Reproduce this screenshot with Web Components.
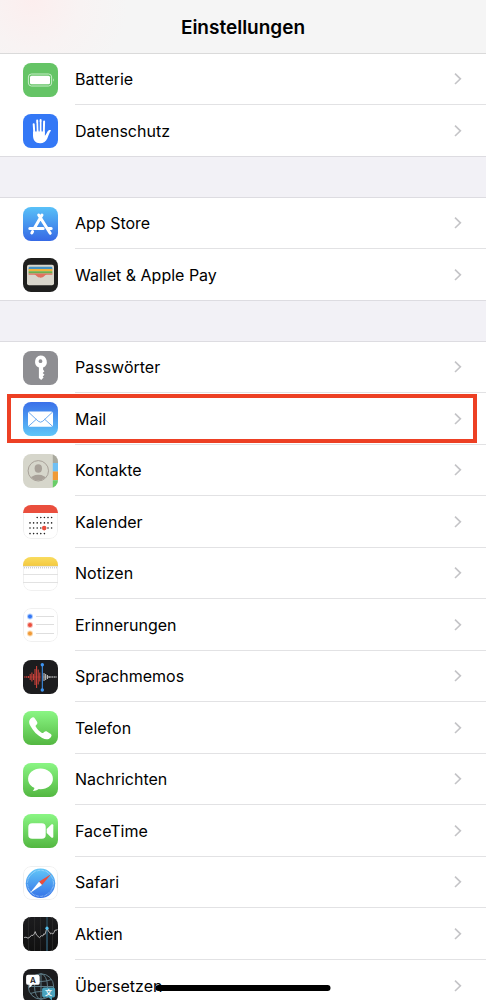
<!DOCTYPE html>
<html lang="de">
<head>
<meta charset="utf-8">
<meta name="viewport" content="width=device-width, initial-scale=1">
<title>Einstellungen</title>
<style>
  body {
    margin: 0;
    background: #f2f1f6;
    color: #000;
    font-family: Inter, "Liberation Sans", sans-serif;
  }
</style>
</head>
<body>
<settings-screen>
  <title-bar slot="header">Einstellungen</title-bar>
  <settings-group>
    <settings-row icon="battery">Batterie</settings-row>
    <settings-row icon="privacy">Datenschutz</settings-row>
  </settings-group>
  <settings-group>
    <settings-row icon="appstore">App Store</settings-row>
    <settings-row icon="wallet">Wallet &amp; Apple Pay</settings-row>
  </settings-group>
  <settings-group>
    <settings-row icon="passwords">Passwörter</settings-row>
    <settings-row icon="mail" marked>Mail</settings-row>
    <settings-row icon="contacts">Kontakte</settings-row>
    <settings-row icon="calendar">Kalender</settings-row>
    <settings-row icon="notes">Notizen</settings-row>
    <settings-row icon="reminders">Erinnerungen</settings-row>
    <settings-row icon="memos">Sprachmemos</settings-row>
    <settings-row icon="phone">Telefon</settings-row>
    <settings-row icon="messages">Nachrichten</settings-row>
    <settings-row icon="facetime">FaceTime</settings-row>
    <settings-row icon="safari">Safari</settings-row>
    <settings-row icon="stocks">Aktien</settings-row>
    <settings-row icon="translate">Übersetzen</settings-row>
  </settings-group>
</settings-screen>

<script>
// Repeats a shape for a list of [x, y] points
const dots = (points, r, fill) =>
  points.map(([x, y]) => `<circle cx="${x}" cy="${y}" r="${r}" fill="${fill}"/>`).join('');

// Vertical bars of the waveform: [x, half height]
const bars = (list, color) =>
  list.map(([x, h]) => `<path d="M${x} ${17 - h}V${17 + h}" stroke="${color}" stroke-width="1"/>`).join('');

const calendarDots = () => {
  const cols = [7, 10.6, 14.2, 17.8, 21.4, 25, 28.6];
  const rows = [[12.5, 2, 7], [17.9, 0, 7], [23, 0, 7], [28.6, 0, 5]];
  return rows.map(([y, from, to]) => dots(cols.slice(from, to).map((x) => [x, y]), 0.8, '#222')).join('');
};

// Hairline round the white tiles
const outline = '<rect x=".5" y=".5" width="34" height="33" rx="7.5" fill="none" stroke="#000" stroke-opacity=".06"/>';

// Every icon is drawn on a 35 x 34 tile
const ICONS = {
  battery: {
    background: '#65c466',
    art: `<rect x="5.4" y="11" width="23.2" height="12" rx="3" fill="none" stroke="#c9edc9" stroke-width="1"/>
      <rect x="7" y="12.7" width="20" height="8.6" rx="1.5" fill="#fff"/>
      <path d="M30 15.2q1.8 1.8 0 3.6z" fill="#c9edc9"/>`
  },
  privacy: {
    background: '#3478f6',
    art: `<g stroke="#fff" stroke-width="2" stroke-linecap="round" fill="none">
        <path d="M10.7 10.2L11.4 20M14.2 6.6L14.7 18M17.6 6V18M21.1 7.5L20.8 18"/></g>
      <path d="M10 17.5h11.9v4.2c1.5-1 2.3-4.8 4.2-5.6 1-.5 2 .1 1.8.7-1.5 1.8-2.4 5-3.6 7.6-1.4 3-3.8 4.8-7.1 4.8-5 0-7.2-3.2-7.2-8z" fill="#fff"/>
      <path d="M12.8 9v7.5M16.1 8v8.5M19.2 8v8.5" stroke="#3478f6" stroke-width=".8"/>`
  },
  appstore: {
    background: 'linear-gradient(#59c1f8, #3669e5)',
    art: `<g stroke="#fff" stroke-width="3" stroke-linecap="round" fill="none">
        <path d="M19 8L11.5 21M15.7 8L27.2 26.3M6.8 21.4H20.2M25 21.4H28.2M9.6 24.6L8.8 26"/></g>`
  },
  wallet: {
    background: '#1f1f1e',
    art: `<rect x="4" y="6.8" width="27" height="20.4" rx="2" fill="#d9d6cc"/>
      <path d="M5.6 10q0-1.3 1.3-1.3H28q1.4 0 1.4 1.3v1.4H5.6z" fill="#4694c4"/>
      <path d="M5.6 11h23.8v2.3H5.6z" fill="#f2b33c"/>
      <path d="M5.6 13.2h23.8v2.4H5.6z" fill="#6cb04d"/>
      <path d="M5.6 15.4h23.8v3H5.6z" fill="#e1715e"/>
      <path d="M4 16.8h7.2c1.6 0 2.2.8 2.9 1.9 1.6 1.9 5.2 1.9 6.8 0 .7-1.1 1.3-1.9 2.9-1.9H31v9.2H4z" fill="#d9d6cc"/>
      <path d="M12.6 16.6c.9.4 1.3 1.2 1.9 2 1.4 1.6 4.6 1.6 6 0 .6-.8 1-1.6 1.9-2z" fill="#e1715e"/>`
  },
  passwords: {
    background: '#8e8e92',
    art: `<path fill-rule="evenodd" fill="#fff" d="M17.5 4.4a6.4 6.4 0 0 1 2.6 12.2v2.2l1.3 1.4-1.7 1.8 1.8 1.8-1.8 1.7.9 1-2.4 2.6-2.3-2.2V16.6A6.4 6.4 0 0 1 17.5 4.4zm0 3.9a1.9 1.9 0 1 0 0 3.8 1.9 1.9 0 0 0 0-3.8z"/>`
  },
  mail: {
    background: 'linear-gradient(#3a70e9, #5fc6f8)',
    art: `<rect x="5" y="9.6" width="25" height="15.2" rx="1.8" fill="#fff"/>
      <path d="M5.6 10.2l9.6 9q2.3 2 4.6 0l9.6-9M5.6 24.2l7.8-7M29.4 24.2l-7.8-7" fill="none" stroke="#5ba0ee" stroke-width=".9"/>`
  },
  contacts: {
    background: '#d6d6cb',
    art: `<path d="M29.8 0H35v9h-5.2z" fill="#a9a99e"/>
      <path d="M29.8 9H35v8.4h-5.2z" fill="#6fc0f5"/>
      <path d="M29.8 17.6H35V26h-5.2z" fill="#f09a37"/>
      <path d="M29.8 26.2H35V34h-5.2z" fill="#68ce67"/>
      <clipPath id="face"><circle cx="15.3" cy="16.8" r="9.8"/></clipPath>
      <circle cx="15.3" cy="16.8" r="10.2" fill="none" stroke="#a8a199" stroke-width="1"/>
      <g clip-path="url(#face)" fill="#a8a199"><ellipse cx="15.3" cy="14.5" rx="3.7" ry="4.2"/>
        <ellipse cx="15.3" cy="25.6" rx="8" ry="4.8"/></g>`
  },
  calendar: {
    background: '#fff',
    art: `${outline}<path d="M0 0h35v8H0z" fill="#ea4e3d"/>${calendarDots()}
      <circle cx="21.2" cy="23.1" r="2.3" fill="#ea4e3d"/>`
  },
  notes: {
    background: '#fff',
    art: `${outline}<linearGradient id="pad" x2="0" y2="1"><stop stop-color="#f9dc5f"/><stop offset="1" stop-color="#f4c93f"/></linearGradient>
      <path d="M0 0h35v9H0z" fill="url(#pad)"/>
      <path d="M0 9.3h35" stroke="#cfcabb" stroke-width=".6"/>
      <path d="M1 10.8h33" stroke="#bbb" stroke-width="1" stroke-dasharray="1 1"/>
      <path d="M0 17.5h35M0 25.5h35" stroke="#e2e2e2" stroke-width="1"/>`
  },
  reminders: {
    background: '#fff',
    art: `${outline}${dots([[7, 8.5]], 3, '#b5d0fb')}${dots([[7, 17]], 3, '#f8bdb7')}${dots([[7, 25.5]], 3, '#fbd9ae')}
      ${dots([[7, 8.5]], 2, '#3478f6')}${dots([[7, 17]], 2, '#ea4e3d')}${dots([[7, 25.5]], 2, '#f09a37')}
      <path d="M13 8.5h18M13 16.5h18M13 25.5h18" stroke="#dedede" stroke-width="1"/>`
  },
  memos: {
    background: '#1c1c1e',
    art: `${bars([[1.8, .5], [3.6, .6], [5.4, 1], [7.2, 3], [8.9, 4.5], [10.6, 3], [12, 8], [13.6, 11], [15.2, 7.5], [16.8, 4.5]], '#d8453c')}
      ${bars([[21, 4], [22.7, 3], [24.4, 2], [26.1, 1], [27.9, .6], [29.7, .6], [31.5, .5], [33, .5]], '#cfcfcf')}
      <path d="M1 17h17" stroke="#d8453c" stroke-width=".4"/><path d="M20 17h14" stroke="#bbb" stroke-width=".4"/>
      <path d="M19.3 4.7V30" stroke="#3f97f6" stroke-width="1"/>${dots([[19.3, 4.7], [19.3, 30]], 1.7, '#3f97f6')}`
  },
  phone: {
    background: 'linear-gradient(#8af684, #53b741)',
    art: `<path fill="#fff" d="M8.1 7.2c1.5-1.3 2.8-1.3 3.8.3l2 3c.8 1.3.6 2.3-.4 3.2-1 .8-1.1 1.4-.5 2.4 1.4 2.3 3.3 4.2 5.6 5.6 1 .6 1.7.5 2.4-.4.9-1.1 1.9-1.4 3.2-.6l3.2 2.1c1.5 1 1.5 2.2.2 3.6-2.1 2.3-4.8 2.4-8.4.5C14 24 10.4 20.3 7.6 15.2c-1.9-3.3-2-6 .5-8z"/>`
  },
  messages: {
    background: 'linear-gradient(#8af684, #53b741)',
    art: `<ellipse cx="17.5" cy="15.9" rx="12.4" ry="10.4" fill="#fff"/>
      <path d="M11.6 22.5c.3 2.4-.4 4.1-1.8 5.4 2.8-.1 5-1 6.5-2.5z" fill="#fff"/>`
  },
  facetime: {
    background: 'linear-gradient(#8af684, #53b741)',
    art: `<rect x="5.3" y="9.2" width="17.4" height="15.6" rx="3.8" fill="#fff"/>
      <path d="M23.7 15l4.6-4.4c.9-.8 2-.5 2 .7v11.4c0 1.2-1.1 1.5-2 .7L23.7 19z" fill="#fff"/>`
  },
  safari: {
    background: '#fff',
    art: `${outline}<linearGradient id="dial" x2="0" y2="1"><stop stop-color="#62c7f8"/><stop offset="1" stop-color="#3572e8"/></linearGradient>
      <circle cx="17.5" cy="17.3" r="14.7" fill="url(#dial)"/>
      <circle cx="17.5" cy="17.3" r="13" fill="none" stroke="#b9dcfb" stroke-width="1.2" stroke-dasharray=".5 .86"/>
      <path d="M28.2 8L16 15.7l3 3.3z" fill="#ea4e3d"/><path d="M7 27l9-11.3 3 3.3z" fill="#fff"/>`
  },
  stocks: {
    background: 'linear-gradient(#1c1c1e, #101010)',
    art: `<path d="M5.5 0v34M11.5 0v34M17.5 0v34M29.5 0v34" stroke="#2c2c2c" stroke-width=".8"/>
      <path d="M24 11v23" stroke="#3c7c9c" stroke-width="1"/><path d="M24 0v11" stroke="#2f5c72" stroke-width="1"/>
      <path d="M1 20.5l2-.3 2 1 2-1.2 1.5-1.8 1.5.3 1.2-1.6 1-2.3 1.3 3.4 1.5 1.3 1.5 1.4 1.8-2 1.5.3 1-2.2 1.2.6 1.2-4.2 1-1.8 1.3 3 1 .6 1.2 2 1-.8 1.2.8 1.2-1.8 1-2.2 1.2.5 1-1.5" fill="none" stroke="#d0d0d0" stroke-width=".8"/>
      ${dots([[24, 11.2]], 1.6, '#53c0ee')}`
  },
  translate: {
    background: '#1c1c1e',
    art: `<g fill="none" stroke="#5d7a85" stroke-width="1"><circle cx="18" cy="17.5" r="12.7"/>
        <ellipse cx="18" cy="17.5" rx="6.5" ry="12.7"/><path d="M18 4.8v25.4M5.3 17.5h25.4M7.5 10.5q10.5 4 21 0M7.5 24.5q10.5-4 21 0"/></g>
      <path d="M5 5.8h9.8q1.9 0 1.9 1.9v6.2q0 1.9-1.9 1.9H9.5L6.3 19v-3.2H5q-1.9 0-1.9-1.9V7.7q0-1.9 1.9-1.9z" fill="#fff"/>
      <path d="M21 18.5h9.2q1.9 0 1.9 1.9v6.2q0 1.9-1.9 1.9H29v3l-3.2-3H21q-1.9 0-1.9-1.9v-6.2q0-1.9 1.9-1.9z" fill="#4aa3bd"/>
      <text x="10" y="14" font-size="8" font-weight="600" text-anchor="middle" fill="#1c1c1e">A</text>
      <text x="25.6" y="26" font-size="7" font-weight="700" text-anchor="middle" fill="#fff" font-family="Noto Sans CJK SC, sans-serif">文</text>`
  }
};

class AppIcon extends HTMLElement {
  static get observedAttributes() {
    return ['name'];
  }
  constructor() {
    super();
    this.attachShadow({ mode: 'open' });
  }
  attributeChangedCallback() {
    const icon = ICONS[this.getAttribute('name')];
    if (!icon) return;
    this.shadowRoot.innerHTML = `
      <style>
        :host {
          display: block;
          flex: none;
          width: 35px;
          height: 34px;
          border-radius: 8px;
          overflow: hidden;
          background: ${icon.background};
        }
        svg { display: block; width: 100%; height: 100%; }
      </style>
      <svg viewBox="0 0 35 34" aria-hidden="true">${icon.art}</svg>
    `;
  }
}

const rowTemplate = document.createElement('template');
rowTemplate.innerHTML = `
  <style>
    :host { display: block; position: relative; height: 51px; }
    :host(:nth-child(even)) { height: 52px; }
    :host(:last-child) { height: 51px; }
    a {
      display: flex;
      align-items: center;
      gap: 17px;
      height: 100%;
      padding-left: 23px;
      color: inherit;
      text-decoration: none;
    }
    .line {
      display: flex;
      flex: 1;
      align-items: center;
      justify-content: space-between;
      box-sizing: border-box;
      height: 100%;
      padding-right: 24px;
      border-bottom: 1px solid #e2e2e4;
    }
    :host(:last-child) .line { border-bottom: 0; }
    .label { font-size: 16px; line-height: 24px; }
    .chevron { flex: none; width: 8px; height: 12px; }
    .mark { display: none; }
    :host([marked]) .mark {
      display: block;
      position: absolute;
      inset: 1px 9px 2px 7px;
      border: 4px solid #ed4024;
      pointer-events: none;
    }
  </style>
  <a href="#">
    <app-icon></app-icon>
    <span class="line">
      <span class="label"><slot></slot></span>
      <svg class="chevron" viewBox="0 0 8 12" aria-hidden="true">
        <path d="M1 .6L6.4 5.8L1 11" fill="none" stroke="#c4c4c7" stroke-width="1.6"/>
      </svg>
    </span>
  </a>
  <div class="mark"></div>
`;

class SettingsRow extends HTMLElement {
  constructor() {
    super();
    this.attachShadow({ mode: 'open' });
    this.shadowRoot.appendChild(rowTemplate.content.cloneNode(true));
  }
  connectedCallback() {
    const name = this.getAttribute('icon');
    this.shadowRoot.querySelector('app-icon').setAttribute('name', name);
    this.shadowRoot.querySelector('a').href = `#${name}`;
  }
}

const groupTemplate = document.createElement('template');
groupTemplate.innerHTML = `
  <style>
    :host {
      display: block;
      background: #fff;
      border-top: 1px solid #dddce1;
      border-bottom: 1px solid #dddce1;
    }
    :host(:nth-of-type(1)) { border-top: 0; }
  </style>
  <slot></slot>
`;

class SettingsGroup extends HTMLElement {
  constructor() {
    super();
    this.attachShadow({ mode: 'open' });
    this.shadowRoot.appendChild(groupTemplate.content.cloneNode(true));
  }
}

const titleTemplate = document.createElement('template');
titleTemplate.innerHTML = `
  <style>
    :host {
      display: block;
      border-bottom: 1px solid #dadada;
      background: radial-gradient(circle at 32px 0, #fceeee, #f8f3f3 48px, #f5f5f5 96px);
    }
    h1 {
      margin: 0;
      padding: 16px 0 13px;
      font-size: 19px;
      font-weight: 600;
      line-height: 24px;
      text-align: center;
    }
  </style>
  <h1><slot></slot></h1>
`;

class TitleBar extends HTMLElement {
  constructor() {
    super();
    this.attachShadow({ mode: 'open' });
    this.shadowRoot.appendChild(titleTemplate.content.cloneNode(true));
  }
}

const screenTemplate = document.createElement('template');
screenTemplate.innerHTML = `
  <style>
    :host {
      display: flex;
      flex-direction: column;
      position: relative;
      height: 100vh;
      overflow: hidden;
    }
    main {
      display: flex;
      flex: 1;
      flex-direction: column;
      gap: 40px;
      min-height: 0;
      overflow: hidden;
    }
    ::slotted(settings-group) { flex: none; }
    /* home indicator floats over the list */
    .home {
      position: absolute;
      bottom: 9px;
      left: 50%;
      width: 36%;
      height: 6px;
      border-radius: 3px;
      background: #000;
      transform: translateX(-50%);
    }
  </style>
  <slot name="header"></slot>
  <main><slot></slot></main>
  <div class="home"></div>
`;

class SettingsScreen extends HTMLElement {
  constructor() {
    super();
    this.attachShadow({ mode: 'open' });
    this.shadowRoot.appendChild(screenTemplate.content.cloneNode(true));
  }
}

customElements.define('app-icon', AppIcon);
customElements.define('settings-row', SettingsRow);
customElements.define('settings-group', SettingsGroup);
customElements.define('title-bar', TitleBar);
customElements.define('settings-screen', SettingsScreen);
</script>
</body>
</html>
